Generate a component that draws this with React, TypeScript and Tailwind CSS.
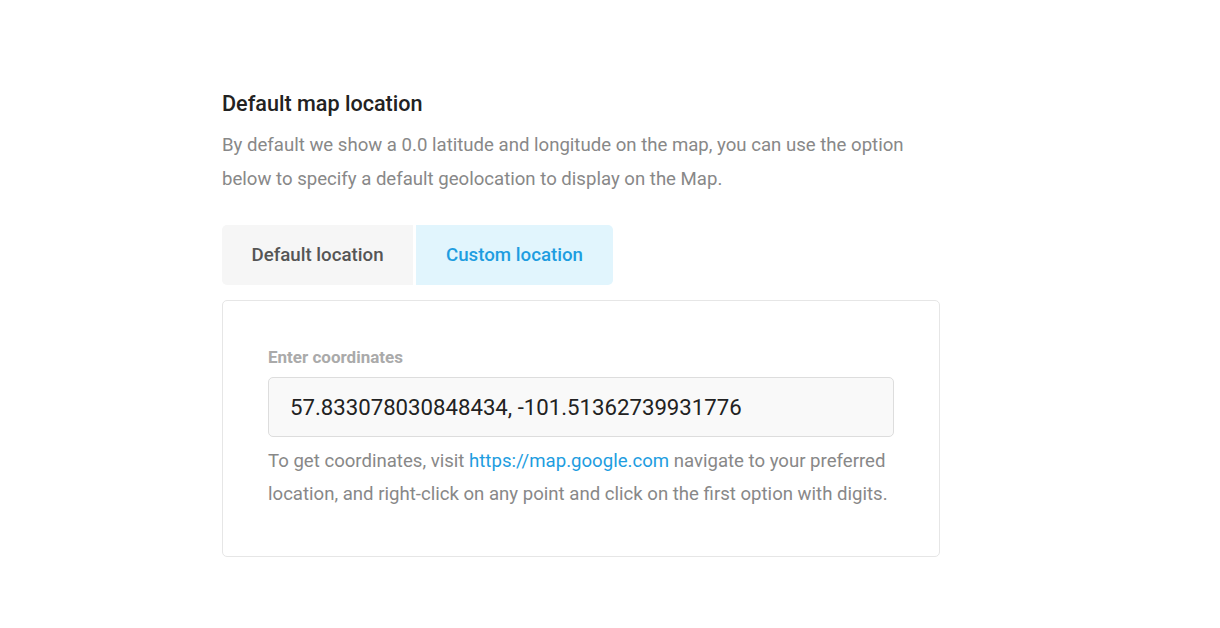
export default function App() {
  return (
    <div className="min-h-screen bg-white font-['Roboto',sans-serif]">
      <div className="w-[718px] ml-[222px] pt-[89px]">
        <h2 className="text-[21.6px] leading-[30px] font-medium text-[#222]">Default map location</h2>
        <p className="mt-[9px] text-[18.6px] leading-[34px] text-[#888]">
          By default we show a 0.0 latitude and longitude on the map, you can use the option below to specify a default
          geolocation to display on the Map.
        </p>

        <div className="mt-[29px] flex gap-[3px]">
          <button className="h-[60px] w-[191px] rounded-l-[5px] bg-[#f6f6f6] text-[18.7px] font-medium text-[#555]">
            Default location
          </button>
          <button className="h-[60px] w-[197px] rounded-r-[5px] bg-[#e1f5fd] text-[18.7px] font-medium text-[#1e9de0]">
            Custom location
          </button>
        </div>

        <div className="mt-[15px] rounded-[5px] border border-[#e6e6e6] px-[45px] pt-[45px] pb-[45px]">
          <label className="block text-[17px] leading-[22px] font-bold text-[#aaa]">Enter coordinates</label>
          <input
            type="text"
            defaultValue="57.833078030848434, -101.51362739931776"
            className="mt-[9px] block h-[60px] w-full rounded-[5px] border border-[#ddd] bg-[#f9f9f9] px-[21px] text-[22.2px] text-[#222] focus:outline-none"
          />
          <p className="mt-[8px] text-[18.6px] leading-[33px] text-[#888]">
            To get coordinates, visit <a href="#" className="text-[#1e9de0]">https://map.google.com</a> navigate to your
            preferred location, and right-click on any point and click on the first option with digits.
          </p>
        </div>
      </div>
    </div>
  );
}
